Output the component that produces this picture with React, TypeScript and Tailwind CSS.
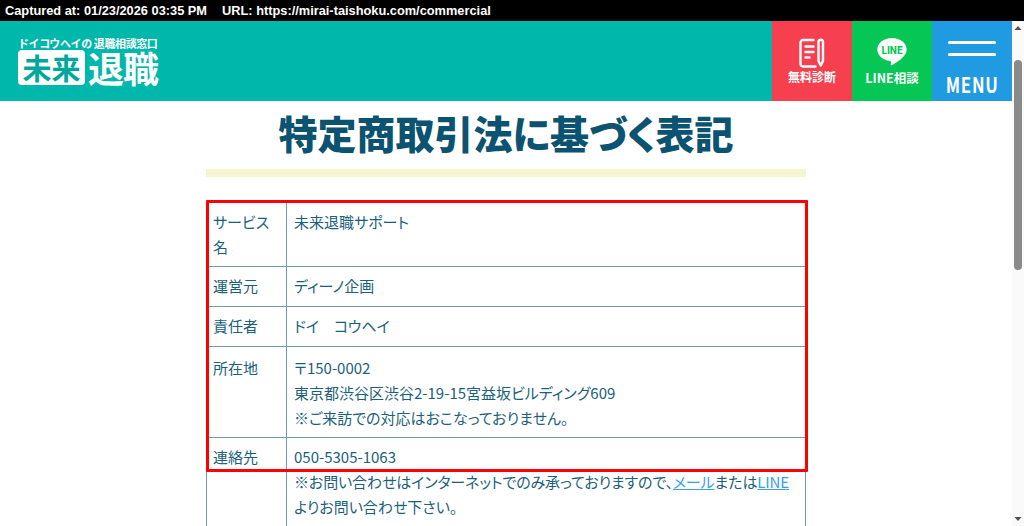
const sans = "font-['Noto_Sans_CJK_JP',sans-serif]";

function PencilNote() {
  return (
    <svg width="26" height="30" viewBox="0 0 26 30" fill="none" stroke="#fff" strokeWidth="2.4" strokeLinejoin="round" strokeLinecap="round">
      <path d="M14.5 2H4a2.5 2.5 0 0 0-2.5 2.5v21.5A2.5 2.5 0 0 0 4 28.5h12.5" />
      <path d="M6.5 8.5h8M6.500 14h8M6.500 19.500h4" />
      <path d="M19.500 3.500a2.300 2.300 0 0 1 4.500 0v19.500l-2.250 4.500-2.250-4.500z" />
    </svg>
  );
}

function LineIcon() {
  return (
    <svg width="30" height="29" viewBox="0 0 30 29">
      <path fill="#fff" d="M15 0C6.900 0 .3 5.100.3 11.500c0 5.700 5.300 10.500 12.400 11.400.5.100 1.100.4 1.300.8.100.4.100 1 0 1.400l-.2 1.200c-.1.400-.3 1.400 1.200.8s8.300-4.800 11.300-8.300c2.100-2.200 3.400-4.700 3.400-7.300C29.700 5.100 23.100 0 15 0z" />
      <text x="15" y="15.500" textAnchor="middle" fontSize="10" fontWeight="800" fill="#06c755" fontFamily="Roboto, sans-serif">LINE</text>
    </svg>
  );
}

function Row({ label, children, className, pad = "pt-[6px]" }: { label: React.ReactNode; children: React.ReactNode; className: string; pad?: string }) {
  return (
    <div className={`flex border-b border-[#6f9bb0] ${className}`}>
      <div className={`w-[80px] shrink-0 border-r border-[#6f9bb0] pl-[6px] pr-2 ${pad}`}>{label}</div>
      <div className={`min-w-0 flex-1 pl-[7px] ${pad}`}>{children}</div>
    </div>
  );
}

export default function App() {
  return (
    <div className={`relative h-[526px] w-[1024px] overflow-hidden bg-white ${sans}`}>
      <div className="flex h-[21px] items-center bg-black pl-[5px] font-['Liberation_Sans',sans-serif] text-[12.800px] font-bold text-white">
        <span>Captured at: 01/23/2026 03:35 PM</span>
        <span className="ml-[15px]">URL: https://mirai-taishoku.com/commercial</span>
      </div>

      <div className="flex h-[505px]">
        <div className="min-w-0 flex-1">
          <header className="flex h-[80px] justify-between bg-[#00b7ac]">
            <div className="pl-[18px] pt-[16px] text-white">
              <div className="h-[13px] text-[11px] font-bold leading-[13px] tracking-[-0.4px]">ドイコウヘイの 退職相談窓口</div>
              <div className="flex items-center gap-[3px]">
                <span className="flex h-[35px] w-[67px] items-center justify-center rounded-[4px] bg-white text-[29px] font-bold leading-none text-[#00a79c]">未来</span>
                <span className="h-[35px] text-[36px] font-bold leading-[35px] tracking-[-1px]">退職</span>
              </div>
            </div>
            <nav className="flex text-white">
              <div className="flex w-[80px] flex-col items-center bg-[#f6404f] pt-[17px]">
                <PencilNote />
                <span className="mt-[2px] text-[12px] font-bold leading-[14px]">無料診断</span>
              </div>
              <div className="flex w-[80px] flex-col items-center bg-[#06c755] pt-[17px]">
                <LineIcon />
                <span className="mt-[3px] text-[12.500px] font-bold leading-[16px]">LINE相談</span>
              </div>
              <div className="flex w-[80px] flex-col items-center bg-[#209ae0] pt-[20px]">
                <span className="h-[3px] w-[48px] rounded-full bg-white" />
                <span className="mt-[9px] h-[3px] w-[48px] rounded-full bg-white" />
                <span className="mt-[16px] scale-x-[0.8] text-[21px] font-bold leading-[24px] tracking-[1px]">MENU</span>
              </div>
            </nav>
          </header>

          <main className="relative mx-auto w-[600px] text-[15px] leading-[25px] text-[#1c5f7b] [font-feature-settings:'palt']">
            <h1 className="mt-[3px] text-center text-[39px] font-black leading-[56px] text-[#0b5370]">特定商取引法に基づく表記</h1>
            <div className="mt-[9px] h-[8px] bg-[#f5f6d0]" />
            <div className="relative mt-[24px] border-x border-[#6f9bb0]">
              <Row label={<>サービス<br />名</>} className="h-[66px]" pad="pt-[8px]">未来退職サポート</Row>
              <Row label="運営元" className="h-[40px]">ディーノ企画</Row>
              <Row label="責任者" className="h-[40px]">ドイ　コウヘイ</Row>
              <Row label="所在地" className="h-[91px]" pad="pt-[8px]">
                〒150-0002<br />
                東京都渋谷区渋谷2-19-15宮益坂ビルディング609<br />
                ※ご来訪での対応はおこなっておりません。
              </Row>
              <div className="flex h-[120px]">
                <div className="w-[80px] shrink-0 border-r border-[#6f9bb0] pl-[6px] pt-[6px]">連絡先</div>
                <div className="min-w-0 flex-1 pl-[7px] pt-[6px]">
                  050-5305-1063<br />
                  <span className="whitespace-nowrap tracking-[-0.12px]">※お問い合わせはインターネットでのみ承っておりますので、<a className="text-[#35a2e6] underline">メール</a>または<a className="text-[#35a2e6] underline">LINE</a></span><br />
                  よりお問い合わせ下さい。
                </div>
              </div>
              <div className="pointer-events-none absolute left-[-1px] top-[-1px] h-[272px] w-[602px] rounded-[1px] border-[3px] border-[#ff0000]" />
            </div>
          </main>
        </div>

        <aside className="flex w-[12px] shrink-0 flex-col items-center bg-[#fafafa]">
          <svg width="12" height="13" viewBox="0 0 12 13"><path d="M2.500 9 6 5l3.500 4z" fill="#505050" /></svg>
          <div className="mt-[26px] h-[210px] w-[8px] rounded-full bg-[#8a8a8a]" />
          <svg className="mt-auto" width="12" height="13" viewBox="0 0 12 13"><path d="M2.500 4 6 8l3.500-4z" fill="#505050" /></svg>
        </aside>
      </div>
    </div>
  );
}
